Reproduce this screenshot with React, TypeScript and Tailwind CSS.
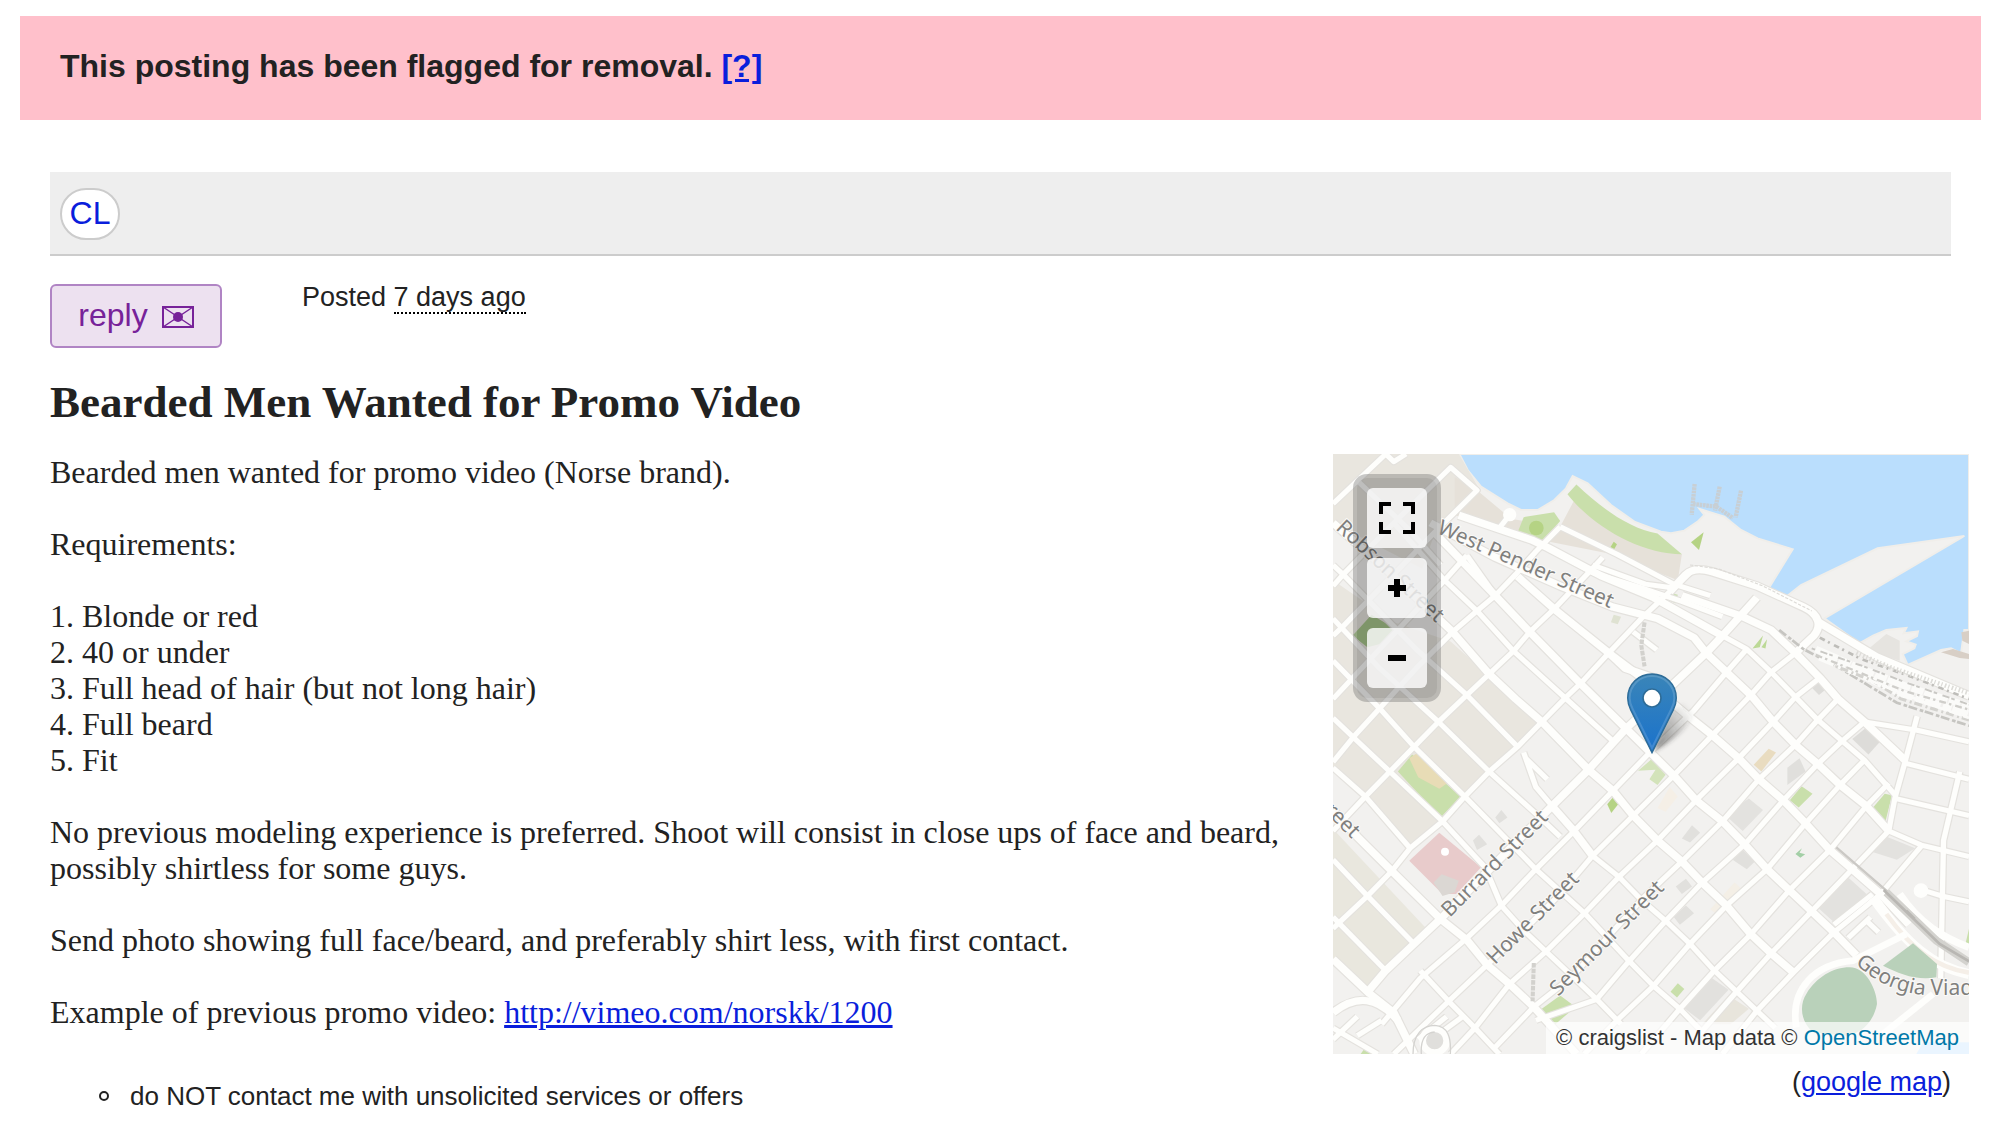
const blocks = [
  { d: "M0 0 L310 0 L360 90 L250 210 L220 300 L0 180 Z", fill: "#e9e6df" },
  { d: "M0 330 L150 440 L290 490 L510 700 L190 1030 L0 820 Z", fill: "#e9e6df" },
  { d: "M0 980 L230 1240 L90 1400 L0 1330 Z", fill: "#e9e7de" },
  { d: "M300 60 L355 95 L440 170 L560 190 L600 110 L860 262 L850 330 L680 260 L490 220 L300 160 Z", fill: "#e6e1d9" },
  { d: "M48 475 L95 420 L150 455 L140 490 L85 505 Z", fill: "#a9c78c" },
  { d: "M160 830 L195 785 L315 895 L265 950 Z", fill: "#c9dfab" },
  { d: "M188 795 L207 782 L285 858 L262 875 L210 845 Z", fill: "#e8dcb6" },
  { d: "M262 990 L365 1080 L305 1150 L270 1150 L188 1063 Z", fill: "#e8cbcb" },
  { d: "M248 1120 L268 1098 L310 1115 L300 1145 L270 1155 Z", fill: "#dbd7d3" },
  { d: "M455 205 L470 165 L545 152 L560 175 L510 235 Z", fill: "#c9dfab" },
  { d: "M578 105 L600 80 C660 140 730 195 800 208 L860 262 C760 262 640 190 578 105 Z", fill: "#c9dfab" },
  { d: "M683 245 L692 229 L700 236 L692 251 Z", fill: "#b5d384" },
  { d: "M508 1455 L560 1415 L598 1445 L548 1490 L510 1480 Z", fill: "#c9dfab" },
  { d: "M676 915 L690 897 L703 915 L686 938 Z", fill: "#b5d384" },
  { d: "M752 828 L785 798 L820 838 L800 865 L780 850 L795 825 Z", fill: "#d3e3ba" },
  { d: "M1034 508 L1060 474 L1052 505 Z M1056 505 L1070 484 L1066 508 Z", fill: "#bcd996" },
  { d: "M832 385 L838 364 L850 368 L845 390 Z", fill: "#cfe0b8" },
  { d: "M685 440 L692 420 L710 425 L702 445 Z", fill: "#dfe2d2" },
  { d: "M1126 905 L1155 868 L1182 888 L1148 924 Z", fill: "#c9dfab" },
  { d: "M1326 930 L1360 888 L1378 892 L1360 968 Z", fill: "#c9dfab" },
  { d: "M832 1405 L850 1383 L866 1398 L848 1420 Z", fill: "#c9dfab" },
  { d: "M1140 1045 L1156 1030 L1150 1042 L1164 1046 L1152 1055 Z", fill: "#a3cfa6" },
  { d: "M1037 812 L1074 770 L1092 780 L1056 830 Z", fill: "#e9dcc0" },
  { d: "M1558 1285 L1568 1240 L1568 1290 Z M68 1568 L82 1548 L105 1568 Z", fill: "#c9dfab" },
  { d: "M1195 1185 L1268 1105 L1315 1150 L1240 1228 Z", fill: "#e3e2df" },
  { d: "M862 1445 L932 1368 L975 1400 L905 1480 Z", fill: "#e2e1de" },
  { d: "M910 1490 L975 1415 L1025 1450 L980 1490 Z", fill: "#e8e5dc" },
  { d: "M968 945 L1025 900 L1060 930 L1010 985 Z", fill: "#e3e2df" },
  { d: "M1120 820 L1150 795 L1165 830 L1120 865 Z", fill: "#e0dfdc" },
  { d: "M1280 745 L1320 710 L1350 750 L1320 785 Z", fill: "#dddcd9" },
  { d: "M1175 605 L1200 590 L1218 612 L1198 630 Z", fill: "#dddcd9" },
  { d: "M1330 1040 L1365 1000 L1435 1030 L1390 1060 Z", fill: "#e3e2df" },
  { d: "M860 1005 L885 970 L905 990 L880 1015 Z M985 1060 L1010 1035 L1040 1065 L1020 1085 Z", fill: "#e1e0dd" },
  { d: "M840 1210 L870 1180 L890 1200 L855 1230 Z M845 1130 L870 1110 L885 1130 L860 1150 Z", fill: "#e1e0dd" },
  { d: "M345 1010 L360 995 L380 1020 L355 1035 Z M400 950 L415 930 L430 950 L410 965 Z", fill: "#e1e0dd" },
  { d: "M850 895 L830 870 L800 925 L820 935 Z", fill: "#f5efe6" },
  { d: "M930 1190 L990 1120 L1010 1140 L955 1210 Z", fill: "#f4efe6" },
];

const smallRoads = [
  "M0 130 L60 70 L130 0 M130 0 L150 20 L180 0",
  "M0 345 L25 315 L150 180 L290 35 L355 95 L250 205 L25 450 L0 475",
  "M0 805 L50 740 L115 665 L205 560 L295 465 L355 410 L400 370 L450 315 L500 255 L560 190",
  "M0 640 L115 510 L275 330 L330 265",
  "M0 985 L80 895 L140 830 L200 765 L260 700 L330 630 L385 575 L445 515 L485 465 L545 405 L630 310 L665 270",
  "M0 1240 L20 1220 L85 1155 L145 1090 L190 1030 L270 960 L325 895 L385 830 L455 765 L515 700 L575 635 L610 600 L680 520 L760 430 L820 370 L880 310",
  "M120 1490 L215 1370 L330 1265 L415 1180 L500 1085 L590 990 L690 880 L790 770 L890 670 L970 570 L1020 510",
  "M150 1568 L285 1430 L380 1335 L470 1245 L560 1150 L640 1050 L740 945 L840 840 L935 735 L1030 630 L1080 570 L1140 520",
  "M290 1568 L350 1500 L435 1385 L525 1300 L620 1200 L705 1105 L800 1010 L895 905 L1000 795 L1085 700 L1140 635 L1200 585",
  "M400 1550 L495 1445 L590 1365 L675 1265 L760 1165 L860 1065 L960 960 L1050 850 L1140 760 L1195 695 L1245 640",
  "M500 1480 L650 1425 L730 1325 L820 1220 L910 1120 L1015 1020 L1110 905 L1195 810 L1255 750 L1310 700",
  "M620 1568 L700 1480 L790 1390 L880 1280 L970 1180 L1070 1085 L1165 965 L1250 865 L1310 800",
  "M760 1568 L855 1450 L940 1350 L1030 1255 L1125 1140 L1225 1035 L1315 920 L1370 860",
  "M900 1520 L995 1405 L1080 1305 L1180 1195 L1280 1085 L1370 985",
  "M960 1568 L1045 1455 L1135 1355 L1235 1250 L1350 1150 L1450 1025",
  "M0 290 L25 315 L205 510 L330 630 L455 765",
  "M0 430 L115 560 L260 700 L385 830 L500 940 L560 1000",
  "M0 540 L115 665 L200 765 L325 895 L500 1085 L620 1200 L730 1325 L790 1390 L855 1450 L910 1510",
  "M0 690 L50 740 L140 830 L270 960 L375 1080 L415 1180 L470 1245 L525 1300 L590 1365 L650 1425 L710 1490",
  "M0 820 L80 895 L190 1030",
  "M0 1060 L85 1155 L200 1280 M215 1350 L285 1430 L350 1500 L410 1568",
  "M0 1210 L130 1350",
  "M150 180 L275 330 L355 410 L445 515 L575 640 L690 750",
  "M60 70 L190 200 L265 290",
  "M330 265 L400 370",
  "M640 1050 L705 1105 L760 1165 L820 1220 L880 1280 L940 1350 L1045 1455 L1090 1500",
  "M960 475 L1020 510 L1080 570 L1140 635 L1195 695 L1255 750 L1310 800 L1385 890",
  "M530 245 L640 310 L760 350 L860 385 L960 425",
  "M640 290 L770 340 L840 350",
  "M560 190 L700 262 L840 340 L930 370",
  "M405 200 L435 160",
  "M1310 700 L1440 722 L1568 752",
  "M1410 808 L1568 850",
  "M1440 685 L1410 805 L1385 900 L1370 985",
  "M1385 900 L1568 945",
  "M1370 985 L1450 1022 L1568 1052",
  "M1545 830 L1505 1010 L1498 1370",
  "M1455 1140 L1500 1155 L1568 1170",
  "M1270 1265 L1325 1210 M1315 1220 L1345 1250 M1235 1230 L1330 1150",
  "M470 780 L500 870 L540 920 M475 795 L528 850",
  "M740 465 L798 512",
  "M0 1530 L60 1470 M0 1500 L110 1568 M60 1520 L120 1480",
  "M210 1530 L280 1470 M230 1540 L320 1470",
];

const mainRoads = [
  "M0 180 L130 300 L260 430 L295 465 L385 575 L450 640 L515 700 L630 825 L690 880 L740 945 L800 1010 L860 1065 L910 1120 L970 1180 L1030 1255 L1080 1305 L1135 1355",
  "M250 205 L400 370 L485 465 L610 600 L720 715 L840 840 L895 905 L960 960 L1015 1020 L1070 1085 L1125 1140 L1180 1195 L1235 1250 L1290 1310",
  "M455 320 L545 405 L680 520 L780 600 L870 680 L935 735 L1000 795 L1050 850 L1110 905 L1165 965 L1225 1035 L1280 1085 L1350 1150 L1420 1230",
  "M310 160 L490 225 L530 245 L660 318 L790 375 L960 475",
  "M240 180 L400 270 L560 345 L690 400 L800 430 L890 480 L920 520 L970 570 L1030 630 L1085 700 L1140 760 L1195 810 L1250 865 L1315 920 L1370 985",
  "M860 370 L1010 425 L1080 460 L1140 520 L1200 585 L1245 640 L1310 700 L1410 800",
  "M0 930 L60 1000 L145 1090 L265 1215 L330 1270 L380 1335 L435 1385 L495 1445 L600 1568",
  "M90 1400 L130 1350 L180 1300 L265 1215 L540 920 L630 825 L720 720 L840 600 L920 520 L960 475 L1045 375",
  "M0 1320 L90 1410 L150 1460 L200 1568",
  "M0 1460 C60 1410 110 1420 160 1480",
  "M540 920 L590 980 L640 1050",
  "M680 520 L720 560 L790 585",
  "M830 360 L870 315 C885 300 910 300 935 308 L1045 345 L1160 400 C1200 420 1205 450 1185 475 L1145 515",
  "M1195 438 L1340 530 L1568 632",
];

const labels = [
  { id: "robson", d: "M6 224 L340 536", text: "Robson Street" },
  { id: "pender", d: "M310 236 L870 480", text: "West Pender Street" },
  { id: "robson-west", d: "M-68 1031 L120 1219", text: "Street" },
  { id: "burrard", d: "M350 1392 L720 1022", text: "Burrard Street" },
  { id: "howe", d: "M486 1534 L840 1180", text: "Howe Street" },
  { id: "seymour", d: "M676 1628 L1100 1200", text: "Seymour Street" },
  { id: "georgia", d: "M1566 1528 C1644 1602 1726 1624 1806 1624 L2106 1624", text: "Georgia Viaduct" },
];

function MapCanvas() {
  return (
    <svg viewBox="0 0 1908 1800" preserveAspectRatio="xMidYMid slice" className="block h-full w-full" role="img" aria-label="Map">
      <defs>
        <linearGradient id="pin" x1="0" y1="0" x2="0" y2="1">
          <stop offset="0" stopColor="#3a85b8" />
          <stop offset="1" stopColor="#1a72cc" />
        </linearGradient>
        <linearGradient id="shade" x1="0" y1="1" x2="1" y2="0">
          <stop offset="0" stopColor="#333" stopOpacity="0.65" />
          <stop offset="0.9" stopColor="#333" stopOpacity="0" />
        </linearGradient>
        <filter id="soft" x="-20%" y="-20%" width="140%" height="140%">
          <feGaussianBlur stdDeviation="7" />
        </filter>
      </defs>

      <rect width="1908" height="1800" fill="#f2f1ef" />

      {/* water */}
      <path
        d="M379 0 L404 48 L444 98 L524 148 L564 168 L614 168 L664 138 L699 103 L719 66 L764 88 L834 153 L904 203 L984 233 L1014 238 L1054 230 L1094 203 L1114 183 L1100 165 L1174 188 L1224 228 L1274 253 L1379 286 L1304 408 L1354 433 L1404 393 L1634 283 L1894 246 L1474 493 L1579 568 L1620 545 L1660 528 L1720 522 L1712 538 L1755 532 L1752 546 L1720 562 L1748 572 L1744 583 L1709 600 L1724 633 L1824 588 L1854 583 L1884 598 L1894 528 L1908 528 L1908 0 Z"
        fill="#badefd"
        stroke="#f0eeea"
        strokeWidth="6"
      />
      <path d="M1085 90 L1076 182 M1160 98 L1146 170 M1224 110 L1208 190 M1080 150 L1150 158 L1200 192" fill="none" stroke="#c8cfd4" strokeWidth="13" strokeDasharray="8 2" />
      <path d="M1074 265 L1112 235 L1098 288 Z" fill="#b5d384" />
      <path d="M1824 595 L1860 585 L1908 600 L1908 615 L1880 612 Z M1885 535 L1908 530 L1908 570 L1888 560 Z" fill="#d8cfc6" />
      <path d="M1600 590 L1660 540 L1700 560 L1700 620 Z" fill="#e6e4e0" />

      <g transform="scale(1.217 1.148)">
        {blocks.map((block) => (
          <path key={block.d} d={block.d} fill={block.fill} />
        ))}
        <g fill="none" stroke="#e4e2de" strokeLinejoin="round">
          {smallRoads.map((d) => (
            <path key={d} d={d} strokeWidth="19" />
          ))}
          {mainRoads.map((d) => (
            <path key={d} d={d} strokeWidth="25" />
          ))}
        </g>
        <g fill="none" stroke="#fefefc" strokeLinejoin="round">
          {smallRoads.map((d) => (
            <path key={d} d={d} strokeWidth="13" />
          ))}
          {mainRoads.map((d) => (
            <path key={d} d={d} strokeWidth="19" />
          ))}
        </g>

        {/* rail yard */}
        <g fill="none">
          <path d="M1100 460 L1160 510 L1250 560 L1390 650 L1568 710" stroke="#c6c5c1" strokeWidth="7" strokeDasharray="22 7 9 4" />
          <path d="M1200 480 L1300 535 L1420 580 L1568 640" stroke="#bebdb9" strokeWidth="7" strokeDasharray="14 9 5 12" />
          <path d="M1190 510 L1300 560 L1420 610 L1568 660" stroke="#fbfbf9" strokeWidth="18" strokeDasharray="60 4 30 3" />
          <path d="M1180 508 L1300 552 L1420 600 L1568 655" stroke="#c9c8c4" strokeWidth="5" strokeDasharray="9 14 18 5" />
          <path d="M1200 530 L1300 575 L1400 625 L1568 680" stroke="#fbfbf9" strokeWidth="20" strokeDasharray="40 6 22 3" />
          <path d="M1190 525 L1300 572 L1410 620 L1568 668" stroke="#cfceca" strokeWidth="6" strokeDasharray="17 8 6 10" />
          <path d="M1240 555 L1330 592 L1400 640 L1568 695" stroke="#d4d3cf" strokeWidth="8" strokeDasharray="5 7 20 9" />
          <path d="M1290 520 L1380 560 L1480 595 L1568 625" stroke="#dddcd8" strokeWidth="12" strokeDasharray="4 5 3 6" />
          <path d="M1320 590 L1460 650 L1568 690" stroke="#fbfbf9" strokeWidth="7" strokeDasharray="30 6" />
          <path d="M880 290 L950 300 L1060 345 L1180 410" stroke="#dddbd7" strokeWidth="3" strokeDasharray="8 4" />
          <path d="M768 440 L760 500 L768 555 M495 1330 L492 1430" stroke="#d2d1cd" strokeWidth="10" strokeDasharray="12 3" />
        </g>
      </g>

      {/* viaduct */}
      <path d="M1510 1180 L1660 1310 L1780 1440 L1908 1520" fill="none" stroke="#cbc9c5" strokeWidth="7" />
      <path d="M1700 1320 C1760 1410 1830 1450 1908 1480" fill="none" stroke="#fefefc" strokeWidth="22" />
      <path d="M1620 1330 C1720 1470 1800 1540 1908 1560" fill="none" stroke="#fefefc" strokeWidth="30" />
      <path d="M1660 1380 C1740 1490 1810 1540 1908 1556" fill="none" stroke="#f5efe8" strokeWidth="14" />
      <path d="M1660 1315 L1810 1460 L1908 1525" fill="none" stroke="#d3d2ce" strokeWidth="24" />
      <path d="M1652 1308 L1820 1470 L1908 1522 M1720 1370 L1745 1395" fill="none" stroke="#b9b7b3" strokeWidth="8" />

      {/* parks by the viaduct */}
      <path d="M1650 1535 L1740 1468 L1812 1530 L1810 1570 C1750 1580 1700 1560 1650 1535 Z" fill="#b9d1ba" />
      <path d="M1390 1720 C1370 1600 1450 1530 1560 1520 L1720 1440 M1650 1740 L1800 1620" fill="none" stroke="#fefefc" strokeWidth="20" />
      <path d="M1550 1540 C1600 1540 1632 1610 1632 1650 C1620 1710 1580 1740 1540 1745 L1440 1735 C1400 1700 1400 1650 1420 1620 C1450 1570 1500 1540 1550 1540 Z" fill="#b9d1ba" />
      <path d="M1750 1800 L1770 1765 L1908 1765 L1908 1800 Z" fill="#badefd" />

      {/* turning circles and ramps */}
      <circle cx="305" cy="1760" r="36" fill="#e0dfdc" stroke="#fefefc" strokeWidth="20" />
      <path d="M240 1800 C240 1740 270 1714 305 1714 C345 1716 355 1750 352 1800 M265 1800 C262 1750 280 1736 305 1734" fill="none" stroke="#d4d3d0" strokeWidth="4" />
      <circle cx="1764" cy="1310" r="22" fill="#fefefc" />
      <circle cx="336" cy="1193" r="12" fill="#fff" />
      <circle cx="530" cy="182" r="20" fill="#fefefc" />
      <circle cx="610" cy="222" r="22" fill="#b5d384" />

      <g
        fill="#80807e"
        stroke="#fbfaf8"
        strokeWidth="6"
        paintOrder="stroke"
        className="font-['Noto_Sans',sans-serif] text-[63px]"
      >
        {labels.map((label) => (
          <g key={label.id}>
            <path id={label.id} d={label.d} fill="none" stroke="none" />
            <text>
              <textPath href={`#${label.id}`}>{label.text}</textPath>
            </text>
          </g>
        ))}
      </g>

      {/* marker */}
      <path d="M960 892 L1010 775 C1040 735 1100 740 1080 785 C1065 815 1030 855 960 892 Z" fill="url(#shade)" filter="url(#soft)" />
      <path
        d="M957 896 L893 768 C886 754 884 745 884 732 C884 690 917 660 957 660 C997 660 1030 690 1030 732 C1030 745 1028 754 1021 768 Z"
        fill="url(#pin)"
        stroke="#2e6c97"
        strokeWidth="4"
      />
      <path
        d="M957 882 L899 765 C892 752 890 744 890 732 C890 694 920 666 957 666 C994 666 1024 694 1024 732 C1024 744 1022 752 1015 765 Z"
        fill="none"
        stroke="#fff"
        strokeOpacity="0.15"
        strokeWidth="6"
      />
      <circle cx="957" cy="732" r="27" fill="#fff" stroke="#2e6c97" strokeWidth="5" />
    </svg>
  );
}

function MapControls() {
  const button = "flex size-[60px] items-center justify-center rounded-md bg-white/80 text-black";

  return (
    <div className="absolute top-5 left-5 flex flex-col gap-[10px] rounded-[14px] border-4 border-white/15 bg-black/25 p-[10px]">
      <button className={button} aria-label="Full screen">
        <svg viewBox="0 0 36 32" className="h-8 w-9" fill="none" stroke="currentColor" strokeWidth="4">
          <path d="M2 12 V2 H12 M24 2 H34 V12 M34 20 V30 H24 M12 30 H2 V20" />
        </svg>
      </button>
      <button className={button} aria-label="Zoom in">
        <svg viewBox="0 0 18 18" className="size-[18px]" stroke="currentColor" strokeWidth="6">
          <path d="M9 0 V18 M0 9 H18" />
        </svg>
      </button>
      <button className={button} aria-label="Zoom out">
        <svg viewBox="0 0 18 18" className="size-[18px]" stroke="currentColor" strokeWidth="6">
          <path d="M0 9 H18" />
        </svg>
      </button>
    </div>
  );
}

const requirements = [
  "Blonde or red",
  "40 or under",
  "Full head of hair (but not long hair)",
  "Full beard",
  "Fit",
];

export default function App() {
  return (
    <main className="min-h-screen bg-white px-5 pt-4 font-['Liberation_Sans',Arial,sans-serif] text-[#222]">
      <div className="bg-[#ffc0cb] px-10 pt-8 pb-9 text-[32px] leading-9 font-bold">
        This posting has been flagged for removal.{" "}
        <a href="#flagged" className="text-[#0a1edc] underline">
          [?]
        </a>
      </div>

      <div className="px-[30px]">
        <header className="mt-[52px] flex border-b-2 border-[#ccc] bg-[#eee] px-[10px] pt-4 pb-[14px]">
          <a
            href="#home"
            className="flex h-[52px] w-[60px] items-center justify-center rounded-[26px] border-2 border-[#ccc] bg-white pb-[2px] text-[32px] leading-9 text-[#0a1edc]"
          >
            CL
          </a>
        </header>

        <div className="mt-7 flex items-start gap-20">
          <button className="flex h-16 w-[172px] items-center justify-center gap-[14px] rounded-md border-2 border-[#b084c4] bg-[#ede1f0] pb-[2px] text-[32px] leading-9 text-[#772299]">
            reply
            <svg viewBox="0 0 32 22" className="mt-1 h-[22px] w-8" fill="none" stroke="currentColor" strokeWidth="2">
              <path d="M1 1 H31 V21 H1 Z" />
              <path d="M1 1 L31 21 M31 1 L1 21" strokeWidth="1.5" />
              <circle cx="16" cy="11" r="5" fill="currentColor" stroke="none" />
            </svg>
          </button>
          <p className="text-[27px] leading-[26px]">
            Posted <time className="border-b-2 border-dotted border-black">7 days ago</time>
          </p>
        </div>

        <h1 className="mt-[30px] font-['Liberation_Serif','Times_New_Roman',serif] text-[45px] leading-[48px] font-bold">
          Bearded Men Wanted for Promo Video
        </h1>

        <div className="mt-7 flex items-start gap-5">
          <div className="min-w-0 flex-1">
            <section className="flex flex-col gap-9 font-['Liberation_Serif','Times_New_Roman',serif] text-[32px] leading-9">
              <p>Bearded men wanted for promo video (Norse brand).</p>
              <p>Requirements:</p>
              <ol>
                {requirements.map((item, index) => (
                  <li key={item}>
                    {index + 1}. {item}
                  </li>
                ))}
              </ol>
              <p>
                No previous modeling experience is preferred. Shoot will consist in close ups of face and beard,
                possibly shirtless for some guys.
              </p>
              <p>Send photo showing full face/beard, and preferably shirt less, with first contact.</p>
              <p>
                Example of previous promo video:{" "}
                <a href="http://vimeo.com/norskk/1200" className="text-[#0a1edc] underline">
                  http://vimeo.com/norskk/1200
                </a>
              </p>
            </section>

            <ul className="mt-[50px] pl-[49px] text-[26px] leading-8">
              <li className="flex items-center gap-[21px]">
                <span className="size-[10px] rounded-full border-2 border-[#222]" />
                do NOT contact me with unsolicited services or offers
              </li>
            </ul>
          </div>

          <aside className="-mr-[18px] w-[636px] shrink-0">
            <div className="relative h-[600px] overflow-hidden">
              <MapCanvas />
              <MapControls />
              <p className="absolute right-0 bottom-0 bg-white/70 px-[10px] text-[22px] leading-8 text-[#333]">
                © craigslist - Map data ©{" "}
                <a href="#osm" className="text-[#0078a8]">
                  OpenStreetMap
                </a>
              </p>
            </div>
            <p className="mt-[10px] pr-[18px] text-right text-[27px] leading-9">
              (
              <a href="#google-map" className="text-[#0a1edc] underline">
                google map
              </a>
              )
            </p>
          </aside>
        </div>
      </div>
    </main>
  );
}
